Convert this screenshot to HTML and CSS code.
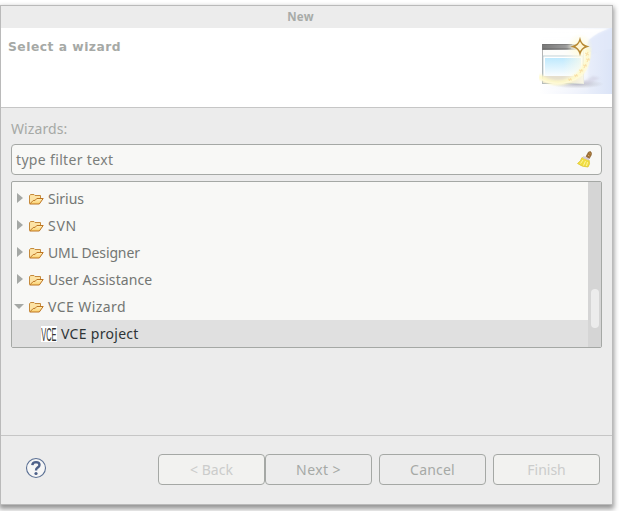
FILE: index.html
```html
<!DOCTYPE html>
<html lang="en">
<head>
<meta charset="utf-8">
<title>New</title>
<link rel="stylesheet" href="styles.css">
</head>
<body>
<svg class="defs" width="0" height="0" aria-hidden="true">
  <defs>
    <linearGradient id="paper" x1="0" y1="0" x2="0" y2="1"><stop offset="0" stop-color="#fff0bd"/><stop offset="1" stop-color="#fbd06c"/></linearGradient>
    <symbol id="folder" viewBox="0 0 16 14">
      <path d="M1.500 11.500V3.800L2.500 2.500h3.500l1 1h5.500v2.500" fill="#fde3a4" stroke="#c58a3c"/>
      <path d="M1.700 12L5.200 8.500l2-.2L8.800 6.500h6.400l-3.900 5.500z" fill="url(#paper)" stroke="#bd7422"/>
    </symbol>
  </defs>
</svg>
<main class="dialog">
  <header class="titlebar"><span>New</span></header>
  <section class="banner">
    <h1>Select a wizard</h1>
    <svg class="wizard-art" width="73" height="66" viewBox="0 0 73 66">
      <defs>
        <linearGradient id="haze" x1="0" x2="1"><stop offset="0" stop-color="#fff"/><stop offset=".5" stop-color="#f0f3fc"/><stop offset="1" stop-color="#dbe4f7"/></linearGradient>
        <linearGradient id="hazefade" x1="0" y1="0" x2="0" y2="1"><stop offset="0" stop-color="#fff"/><stop offset=".55" stop-color="#fff" stop-opacity=".8"/><stop offset="1" stop-color="#fff" stop-opacity="0"/></linearGradient>
        <linearGradient id="bar" x1="0" x2="1"><stop offset="0" stop-color="#777"/><stop offset=".55" stop-color="#999"/><stop offset="1" stop-color="#eee"/></linearGradient>
        <linearGradient id="sky" x1="0" y1="0" x2="0" y2="1"><stop offset="0" stop-color="#bfe9fd"/><stop offset="1" stop-color="#fafdff"/></linearGradient>
        <linearGradient id="wash" x1="0" x2="1"><stop offset=".5" stop-color="#fffdec" stop-opacity="0"/><stop offset="1" stop-color="#fffdec" stop-opacity=".8"/></linearGradient>
        <radialGradient id="glow"><stop offset="0" stop-color="#fffbd7"/><stop offset="1" stop-color="#fffbd7" stop-opacity="0"/></radialGradient>
        <radialGradient id="shade"><stop offset="0" stop-color="#8f8d9e" stop-opacity=".6"/><stop offset="1" stop-color="#aaa" stop-opacity="0"/></radialGradient>
        <filter id="soft" x="-20%" y="-20%" width="140%" height="140%"><feGaussianBlur stdDeviation="1.3"/></filter>
      </defs>
      <rect width="73" height="66" fill="url(#haze)"/>
      <path d="M0 0H73Q60 4 49 13Q48 40 50 66H0z" fill="url(#hazefade)" filter="url(#soft)"/>
      <path d="M73 0v21Q61 22 49 28Q46 19 50 12Q60 3 73 0z" fill="#e3eafa" opacity=".6"/>
      <ellipse cx="38" cy="56" rx="27" ry="4.500" fill="url(#shade)"/>
      <path d="M44 54L54 48L61 50L48 57z" fill="#ccc9db" opacity=".5" filter="url(#soft)"/>
      <rect x="3.500" y="16.500" width="41" height="39" fill="#fdfdfb" stroke="#b5b5b5"/>
      <rect x="3" y="16" width="42" height="6" fill="url(#bar)"/>
      <path d="M4 16.500h29M4 20.500h28" stroke="#666" opacity=".45"/>
      <rect x="4" y="28" width="40" height="27" fill="#fff" stroke="#a8bfc5" stroke-width=".7"/>
      <rect x="6" y="30" width="36" height="18" fill="url(#sky)"/>
      <rect x="4" y="48" width="40" height="7" fill="#e6dfce"/>
      <rect x="3" y="22" width="42" height="34" fill="url(#wash)"/>
      <circle cx="41" cy="18.500" r="13" fill="url(#glow)"/>
      <path d="M0 48Q12 57 25 54Q49 49 49 20" fill="none" stroke="#fff9c9" stroke-width="5" opacity=".9" filter="url(#soft)"/>
      <path d="M2 51Q12 57 25 55Q51 50 51 24" fill="none" stroke="#fffada" stroke-width="1.500" opacity=".8"/>
      <g fill="none" stroke="#f9dfa6" stroke-width="1"><path d="M46 25l4 2m-3 1l2-4M47 31l4 1m-3 2l2-4M44 37l4 1m-3 2l2-4M40 42l4 1m-3 2l2-4M35 47l4 1m-3 1l2-3M29 51l4 1m-3 1l2-3"/></g>
      <path d="M41 11.500Q42.500 17 48 18.500Q42.500 20 41 25.500Q39.500 20 34 18.500Q39.500 17 41 11.500z" fill="#fff6d4" stroke="#b88a35" stroke-width="1.400"/>
    </svg>
  </section>
  <section class="content">
    <label class="caption"><span>Wizards:</span></label>
    <div class="filter">
      <span>type filter text</span>
      <svg width="16" height="17" viewBox="0 0 16 17">
        <path d="M9 5.500l2.500-4.500 2-.5 1 1.500-.2 2L12 8z" fill="#9c6b30" stroke="#86602f" stroke-width=".6"/>
        <path d="M11 4l1.500 1M12.500 2l1 .8" stroke="#dfb56c" stroke-width="1"/>
        <path d="M5 6.500L12 9Q13.500 13 11 16Q5 16 .5 12.500Q4 10 5 6.500z" fill="#f0de40" stroke="#dfc737" stroke-width=".8"/>
        <path d="M6 9L3.500 12.500M8.500 10l-2 4.500M10.500 11l-1 4" stroke="#fff4a0" stroke-width="1"/>
        <path d="M6 6l6 2.500" stroke="#d8cbd0" stroke-width="2"/>
      </svg>
    </div>
    <div class="tree">
      <ul class="rows">
        <li><i class="closed"></i><svg class="folder"><use href="#folder"/></svg><span class="t-sirius">Sirius</span></li>
        <li><i class="closed"></i><svg class="folder"><use href="#folder"/></svg><span class="t-svn">SVN</span></li>
        <li><i class="closed"></i><svg class="folder"><use href="#folder"/></svg><span class="t-uml">UML Designer</span></li>
        <li><i class="closed"></i><svg class="folder"><use href="#folder"/></svg><span class="t-user">User Assistance</span></li>
        <li><i class="open"></i><svg class="folder"><use href="#folder"/></svg><span class="t-vce">VCE Wizard</span></li>
        <li class="selected"><svg class="vce-icon" viewBox="0 0 16 16"><rect width="16" height="16" fill="#fff"/><text transform="translate(.3 14.500) scale(.4 1)">VCE</text></svg><span class="t-project">VCE project</span></li>
      </ul>
      <div class="scrollbar"><div class="thumb"></div></div>
    </div>
  </section>
  <footer class="footer">
    <svg class="help" width="22" height="22" viewBox="0 0 22 22">
      <circle cx="11" cy="11" r="9.500" fill="#f6f6f6" stroke="#5b7094" stroke-width="1.100"/>
      <path d="M7.300 8.200Q7.600 5.100 11.100 5.100Q14.500 5.200 14.500 8Q14.500 9.500 12.600 10.600Q11 11.600 11 13.500" fill="none" stroke="#4e6189" stroke-width="2.400"/>
      <circle cx="11" cy="16.500" r="1.600" fill="#4e6189"/>
    </svg>
    <div class="buttons">
      <button class="dim back" disabled><span>&lt; Back</span></button>
      <button class="next"><span>Next &gt;</span></button>
      <button class="cancel"><span>Cancel</span></button>
      <button class="dim finish" disabled><span>Finish</span></button>
    </div>
  </footer>
</main>
</body>
</html>
```
FILE: styles.css
```css
* { box-sizing: border-box; }
html, body { margin: 0; height: 100%; overflow: hidden; background: #fff; }
body { padding-top: 5px; font: 14px/20px "Noto Sans", "Open Sans", sans-serif; color: #737673; }
.defs { display: block; width: 0; height: 0; }
.dialog {
  width: 613px; height: 500px; display: flex; flex-direction: column;
  background: #ececec; border: 1px solid #bababa;
  box-shadow: 0 3px 5px 1px rgba(0, 0, 0, .42);
}
span { white-space: nowrap; }
.titlebar { height: 22px; text-align: center; font: bold 11.5px/22px "Noto Sans", sans-serif; color: #a8aba8; padding-right: 12px; letter-spacing: .3px; }
.banner { height: 80px; background: #fff; border-bottom: 1px solid #c6c6c6; display: flex; justify-content: space-between; }
h1 { margin: 10px 0 0 7px; font: bold 12.3px/18px "DejaVu Sans", sans-serif; color: #a6a9a6; letter-spacing: .5px; white-space: nowrap; }
.wizard-art { display: block; }
.content { height: 327px; padding: 11px 10px 0; display: flex; flex-direction: column; }
.caption { height: 25px; line-height: 20px; color: #a6a9a6; letter-spacing: .1px; }
.filter {
  height: 31px; border: 1px solid #a5a8a5; border-radius: 4px; background: #f8f8f6;
  display: flex; align-items: center; justify-content: space-between; padding: 0 8px 0 4px; color: #7b7e7b;
  letter-spacing: .34px;
}
.tree { height: 167px; margin-top: 6px; border: 1px solid #a5a8a5; border-radius: 2px; display: flex; background: #f8f8f6; overflow: hidden; }
.rows { list-style: none; margin: 0; padding: 3px 0 0; flex: 1; }
.rows li { height: 27px; padding-left: 5px; display: flex; align-items: center; }
.rows .selected { padding-left: 29px; background: #e0e0e0; color: #2e3436; }
.rows span { position: relative; top: .5px; }
.t-svn { letter-spacing: .7px; }
.t-uml { letter-spacing: -.12px; }
.t-user { letter-spacing: .07px; }
.t-vce { letter-spacing: .42px; }
.t-project { letter-spacing: .3px; }
.closed { border-left: 6px solid #a5a8a5; border-top: 5.5px solid transparent; border-bottom: 5.5px solid transparent; margin-right: 5px; position: relative; top: -1px; }
.open { border-top: 5px solid #a5a8a5; border-left: 5px solid transparent; border-right: 5px solid transparent; margin: 0 4px 0 -3px; }
.folder { width: 16px; height: 14px; margin-right: 4px; flex: none; }
.vce-icon { width: 16px; height: 16px; margin-right: 4px; flex: none; }
.vce-icon text { font: 18.500px "Liberation Sans", sans-serif; fill: #333; }
.scrollbar { width: 13px; padding: 107px 2px 0 3px; background: #d5d5d5; }
.thumb { width: 8px; height: 39px; border-radius: 4px; background: #ececec; }
.footer { flex: 1; border-top: 1px solid #c6c6c6; display: flex; justify-content: space-between; padding: 18px 12px 0 24px; }
.help { margin-top: 3px; }
.buttons { display: flex; }
button { width: 107px; height: 31px; padding: 0; border: 1px solid #a5a8a5; border-radius: 4px; background: #ececec; font: inherit; color: #a6a9a6; }
button span { position: relative; top: .5px; }
.dim { background: #f2f2f0; color: #cbcccb; }
.next { letter-spacing: .4px; }
.cancel { letter-spacing: .2px; }
.cancel, .finish { margin-left: 7px; }
```
